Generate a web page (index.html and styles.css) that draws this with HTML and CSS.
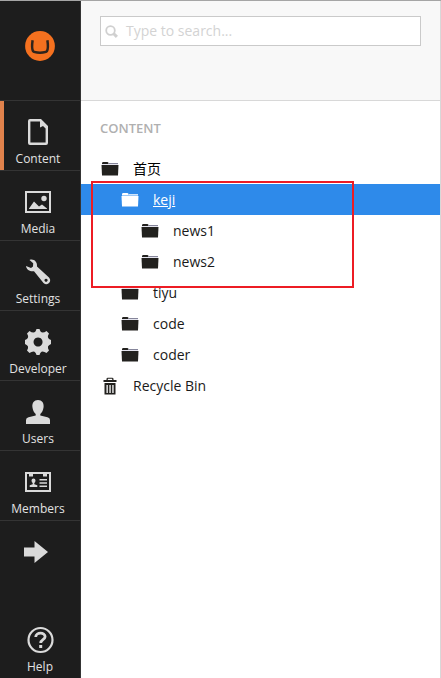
FILE: index.html
```html
<!DOCTYPE html>
<html lang="en">
<head>
<meta charset="utf-8">
<title>Content</title>
<link rel="stylesheet" href="styles.css">
</head>
<body>
<svg width="0" height="0" class="defs">
  <symbol id="folder" viewBox="0 0 18 15"><path d="M1 3V1.800l1-.8h4.500l1 .8V3z"/><path class="edge" d="M7.500 2H17v1H7.500z"/><path class="rim" d="M1 3h16v1H1z"/><path d="M.5 4h17L17 14.500H1z"/></symbol>
</svg>
<div class="app">
  <nav class="sidebar">
    <div class="logo"><svg width="30" height="30" viewBox="0 0 30 30"><circle cx="15" cy="15" r="14.900" fill="#f5711f"/><path d="M7.600 9.300c-.6 4-.6 9.200.5 10.900 1.100 1.900 12.700 1.900 13.800 0 1.100-1.700 1.100-6.900.5-10.900" fill="none" stroke="#30241c" stroke-width="2.500"/></svg></div>
    <a class="item active"><svg viewBox="0 0 30 30"><path fill-rule="evenodd" d="M7 2h11l7 7v17q0 2-2 2H7q-2 0-2-2V4q0-2 2-2zm.4 2.400v21.200h15.200V11.500L20 9l-3 1.500V4.400z"/></svg><span>Content</span></a>
    <a class="item"><svg viewBox="0 0 30 30"><path fill-rule="evenodd" d="M2 4h26v22H2zm2 2v18h22V6z"/><circle cx="21" cy="11.500" r="2.700"/><path d="M6 21.500l5-7 5 5 3-2 5 4v.5H6z"/></svg><span>Media</span></a>
    <a class="item"><svg viewBox="0 0 30 30"><path fill-rule="evenodd" d="M6.500 3c4-1.500 8 1.500 7.500 6.500l12 11c3.500 4-1.500 9-5.500 5.500L11 14.200C7.500 15 3.500 13 3 9l5 2 2-1.500.2-3.200zM23 21.700a1.600 1.600 0 1 0 .1 0z"/></svg><span>Settings</span></a>
    <a class="item"><svg viewBox="0 0 30 30"><path fill-rule="evenodd" d="M13.500 2h3q1 3.500 3 3.500 2 0 4-1.500l2.500 2.500q-1.500 2.500-1 4 .5 1.500 3 2.500v4q-2.500 1-3 2.500-.5 1.500 1 4L23.500 26q-2-1.500-4-1.500-2 0-3 3.500h-3q-1-3.500-3-3.500-2 0-4 1.500L4 23.500q1.500-2.500 1-4Q4.500 18 2 17v-4q2.500-1 3-2.500.5-1.500-1-4L6.500 4q2 1.500 4 1.500 2 0 3-3.500zM15 10.500a4.500 4.500 0 1 0 .1 0z"/></svg><span>Developer</span></a>
    <a class="item"><svg viewBox="0 0 30 30"><path d="M15 3c4 0 6 3 5.600 7-.4 3.500-1.600 5.500-3.300 7v1.500l7.200 1.700Q27 21 27 23v4H3v-4q0-2 2.500-2.800l7.200-1.700V17c-1.700-1.500-2.900-3.500-3.300-7C9 6 11 3 15 3z"/></svg><span>Users</span></a>
    <a class="item"><svg viewBox="0 0 30 30"><path fill-rule="evenodd" d="M2 5h26v20H2zm2 2v16h22V7h-2v2.500h-4V7H10v2.500H6V7z"/><ellipse cx="10.500" cy="13.700" rx="2" ry="2.300"/><path d="M9.700 15h1.600v2.200l3 1V20H6.700v-1.800l3-1zM16.500 12H24v1.500h-7.500zm0 3.200H24v1.500h-7.500zm0 3.200H24v1.500h-7.500z"/></svg><span>Members</span></a>
    <a class="item more"><svg viewBox="0 0 30 30"><path d="M1 10.500h10.500V4L25 15 11.500 26v-6.500H1z"/></svg></a>
    <a class="item help"><svg viewBox="0 0 30 30"><circle cx="15.500" cy="15" r="12" fill="none" stroke="#dadada" stroke-width="2.200"/><path d="M10.700 12c.2-5.200 9.600-4.900 9.400-.3-.1 3-4.400 3-4.400 6.300" fill="none" stroke="#dadada" stroke-width="2.800"/><path d="M14.200 20h3v3h-3z"/></svg><span>Help</span></a>
  </nav>
  <main class="panel">
    <header class="top">
      <div class="search"><svg width="14" height="14" viewBox="0 0 14 14"><circle cx="5.500" cy="5.500" r="4.300" fill="none" stroke="#d0d0d0" stroke-width="1.800"/><path d="M8.500 8.500l3.400 3.400" stroke="#d0d0d0" stroke-width="3"/></svg><span>Type to search...</span></div>
    </header>
    <h1>CONTENT</h1>
    <ul class="tree">
      <li class="l1 cjk"><svg><use href="#folder"/></svg><span>首页</span></li>
      <li class="l2 selected"><svg><use href="#folder"/></svg><span>keji</span></li>
      <li class="l3"><svg><use href="#folder"/></svg><span>news1</span></li>
      <li class="l3"><svg><use href="#folder"/></svg><span>news2</span></li>
      <li class="l2"><svg><use href="#folder"/></svg><span>tiyu</span></li>
      <li class="l2"><svg><use href="#folder"/></svg><span>code</span></li>
      <li class="l2"><svg><use href="#folder"/></svg><span>coder</span></li>
      <li class="l1 bin"><svg viewBox="0 0 18 18"><path fill-rule="evenodd" d="M5.500 3V1.500l1-.8h5l1 .8V3h3v2h-13V3zm1.300 0h4.400V1.800H6.800zM3.500 6h11v11.500h-11zM5.500 8v8h1.300V8zm2.900 0v8h1.300V8zm2.900 0v8h1.300V8z"/></svg><span>Recycle Bin</span></li>
    </ul>
  </main>
</div>
<div class="highlight"></div>
</body>
</html>
```
FILE: styles.css
```css
* { box-sizing: border-box; }
body { margin: 0; background: #fff; font-family: "Open Sans", "Noto Sans CJK SC", sans-serif; }
.defs { position: absolute; }
.app { display: flex; height: 678px; border-top: 1px solid #a5a5a5; overflow: hidden; }
.sidebar { display: flex; flex-direction: column; flex: 0 0 81px; background: #1d1d1d; border-right: 1px solid #343434; }
.logo { height: 100px; flex: none; border-bottom: 1px solid #343434; padding: 30px 0 0 25px; }
.logo svg { display: block; }
.item { display: flex; flex-direction: column; align-items: center; flex: none; height: 70px; padding: 16px 4px 0 0; border-bottom: 1px solid #343434; color: #e2e2e2; font-size: 12px; line-height: 18px; }
.item svg { width: 30px; height: 30px; fill: #dadada; flex: none; }
.item span { margin-top: 3px; }
.active { box-shadow: inset 4px 0 #e0824c; }
.more { border: 0; }
.help { margin-top: auto; height: 70px; padding: 17px 0 0; border: 0; }
.panel { flex: 1; border-right: 1px solid #d8d8d8; }
.top { height: 100px; background: #f8f8f8; border-bottom: 1px solid #d8d8d8; padding: 15px 19px 0; }
.search { display: flex; align-items: center; height: 30px; border: 1px solid #cacaca; background: #fff; padding-left: 4px; color: #d3d3d3; font-size: 14px; }
.search svg { margin-top: 2px; }
.search span { margin: -1px 0 0 7px; }
h1 { margin: 17px 0 0 19px; font-size: 13px; line-height: 20px; font-weight: 600; color: #b0b0b0; }
.tree { --edge: #85859a; --rim: #e4e4ee; list-style: none; margin: 15px 0 0; padding: 0; }
.tree li { display: flex; align-items: center; height: 31px; font-size: 14px; color: #1a1a1a; }
.tree svg { width: 18px; height: 15px; margin-right: 14px; fill: #22211e; flex: none; }
.edge { fill: var(--edge); }
.rim { fill: var(--rim); }
.tree .l1 { padding-left: 20px; }
.tree .l2 { padding-left: 40px; }
.tree .l3 { padding-left: 60px; }
.tree .cjk span { margin-top: -2px; color: #000; }
.tree .selected { --edge: #cfe4fb; --rim: #9cc8f6; background: #2e8aea; color: #fff; text-decoration: underline; }
.tree .selected svg { fill: #fff; }
.tree .bin svg { height: 18px; }
.highlight { position: absolute; left: 91px; top: 181px; width: 263px; height: 107px; border: 2px solid #ed1c24; }
```
